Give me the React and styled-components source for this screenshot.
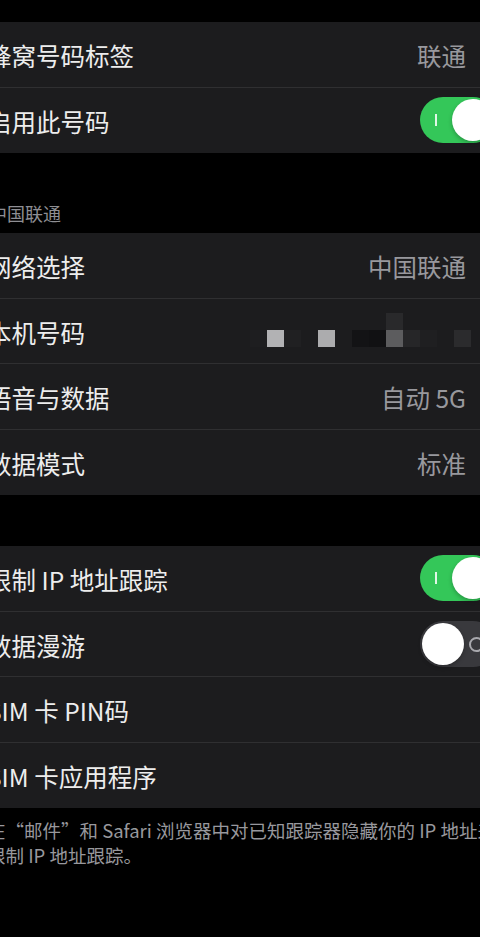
import React from "react";
import styled, { createGlobalStyle } from "styled-components";

const GlobalStyle = createGlobalStyle`
  html, body {
    margin: 0;
    padding: 0;
    background: #000;
  }
  body {
    font-family: "Noto Sans CJK SC", "Noto Sans", "Liberation Sans", sans-serif;
    -webkit-font-smoothing: antialiased;
  }
`;

const Viewport = styled.div`
  width: 480px;
  height: 937px;
  overflow: hidden;
  background: #000;
`;

const Screen = styled.div`
  width: 540px;
  margin-left: -13px;
  padding-top: 22px;
`;

const Group = styled.div`
  background: #1c1c1e;
`;

const Row = styled.div`
  height: 65.5px;
  box-sizing: border-box;
  display: flex;
  align-items: center;
  justify-content: space-between;
  padding-right: 31px;
  border-bottom: ${(p) => (p.$last ? "none" : "1px solid #2f2f31")};
`;

const Label = styled.span`
  font-size: 24.5px;
  color: #ededed;
  white-space: nowrap;
  padding-top: 3px;
`;

const Value = styled.span`
  font-size: 24.5px;
  color: #98989d;
  margin-right: 30px;
  white-space: nowrap;
  padding-top: 3px;
`;

const SectionHeader = styled.div`
  height: 80px;
  box-sizing: border-box;
  display: flex;
  align-items: flex-end;
  padding: 0 0 9px 2px;
  font-size: 18px;
  line-height: 22px;
  color: #8e8e93;
`;

const Spacer = styled.div`
  height: ${(p) => p.$h}px;
`;

const Footer = styled.div`
  padding-top: 10px;
  font-size: 18.5px;
  line-height: 25px;
  color: #98989d;
`;

const FooterLine = styled.div`
  white-space: nowrap;
`;

const Track = styled.div`
  position: relative;
  width: 76px;
  height: 46px;
  border-radius: 23px;
  background: ${(p) => (p.$on ? "#34c759" : "#39393d")};
  flex-shrink: 0;
`;

const Knob = styled.div`
  position: absolute;
  top: 2px;
  left: ${(p) => (p.$on ? "32px" : "2px")};
  width: 42px;
  height: 42px;
  border-radius: 50%;
  background: #fff;
  box-shadow: 0 2px 4px rgba(0, 0, 0, 0.25);
`;

const OnMark = styled.div`
  position: absolute;
  left: 15px;
  top: 17px;
  width: 2px;
  height: 12px;
  background: rgba(255, 255, 255, 0.85);
`;

const OffMark = styled.div`
  position: absolute;
  right: 12px;
  top: 16px;
  width: 11px;
  height: 11px;
  border-radius: 50%;
  border: 2px solid #a8a8ad;
`;

const Mosaic = styled.div`
  display: grid;
  grid-template-columns: repeat(13, 17px);
  grid-template-rows: 17px 17px;
  margin-right: 25px;
  margin-top: -2px;
`;

const Cell = styled.div`
  background: ${(p) => p.$c};
`;

const Toggle = ({ on }) => (
  <Track $on={on}>
    {on ? <OnMark /> : <OffMark />}
    <Knob $on={on} />
  </Track>
);

const topCells = [
  "#1c1c1e", "#1c1c1e", "#1c1c1e", "#1c1c1e", "#1c1c1e", "#1c1c1e", "#1c1c1e",
  "#1c1c1e", "#29292b", "#1c1c1e", "#1c1c1e", "#1c1c1e", "#1c1c1e",
];
const bottomCells = [
  "#1e1e20", "#b2b2b4", "#202022", "#1c1c1e", "#acacae", "#1c1c1e", "#131315",
  "#111113", "#5c5c5e", "#262628", "#1f1f21", "#1c1c1e", "#2b2b2d",
];

const Blurred = () => (
  <Mosaic>
    {topCells.map((c, i) => (
      <Cell key={"t" + i} $c={c} />
    ))}
    {bottomCells.map((c, i) => (
      <Cell key={"b" + i} $c={c} />
    ))}
  </Mosaic>
);

export default function App() {
  return (
    <>
      <GlobalStyle />
      <Viewport>
        <Screen>
          <Group>
            <Row>
              <Label>蜂窝号码标签</Label>
              <Value>联通</Value>
            </Row>
            <Row $last>
              <Label>启用此号码</Label>
              <Toggle on />
            </Row>
          </Group>

          <SectionHeader>中国联通</SectionHeader>

          <Group>
            <Row>
              <Label>网络选择</Label>
              <Value>中国联通</Value>
            </Row>
            <Row>
              <Label>本机号码</Label>
              <Blurred />
            </Row>
            <Row>
              <Label>语音与数据</Label>
              <Value>自动 5G</Value>
            </Row>
            <Row $last>
              <Label>数据模式</Label>
              <Value>标准</Value>
            </Row>
          </Group>

          <Spacer $h={51} />

          <Group>
            <Row>
              <Label>限制 IP 地址跟踪</Label>
              <Toggle on />
            </Row>
            <Row>
              <Label>数据漫游</Label>
              <Toggle on={false} />
            </Row>
            <Row>
              <Label>SIM 卡 PIN码</Label>
            </Row>
            <Row $last>
              <Label>SIM 卡应用程序</Label>
            </Row>
          </Group>

          <Footer>
            <FooterLine>在“邮件”和 Safari 浏览器中对已知跟踪器隐藏你的 IP 地址来</FooterLine>
            <FooterLine>限制 IP 地址跟踪。</FooterLine>
          </Footer>
        </Screen>
      </Viewport>
    </>
  );
}
